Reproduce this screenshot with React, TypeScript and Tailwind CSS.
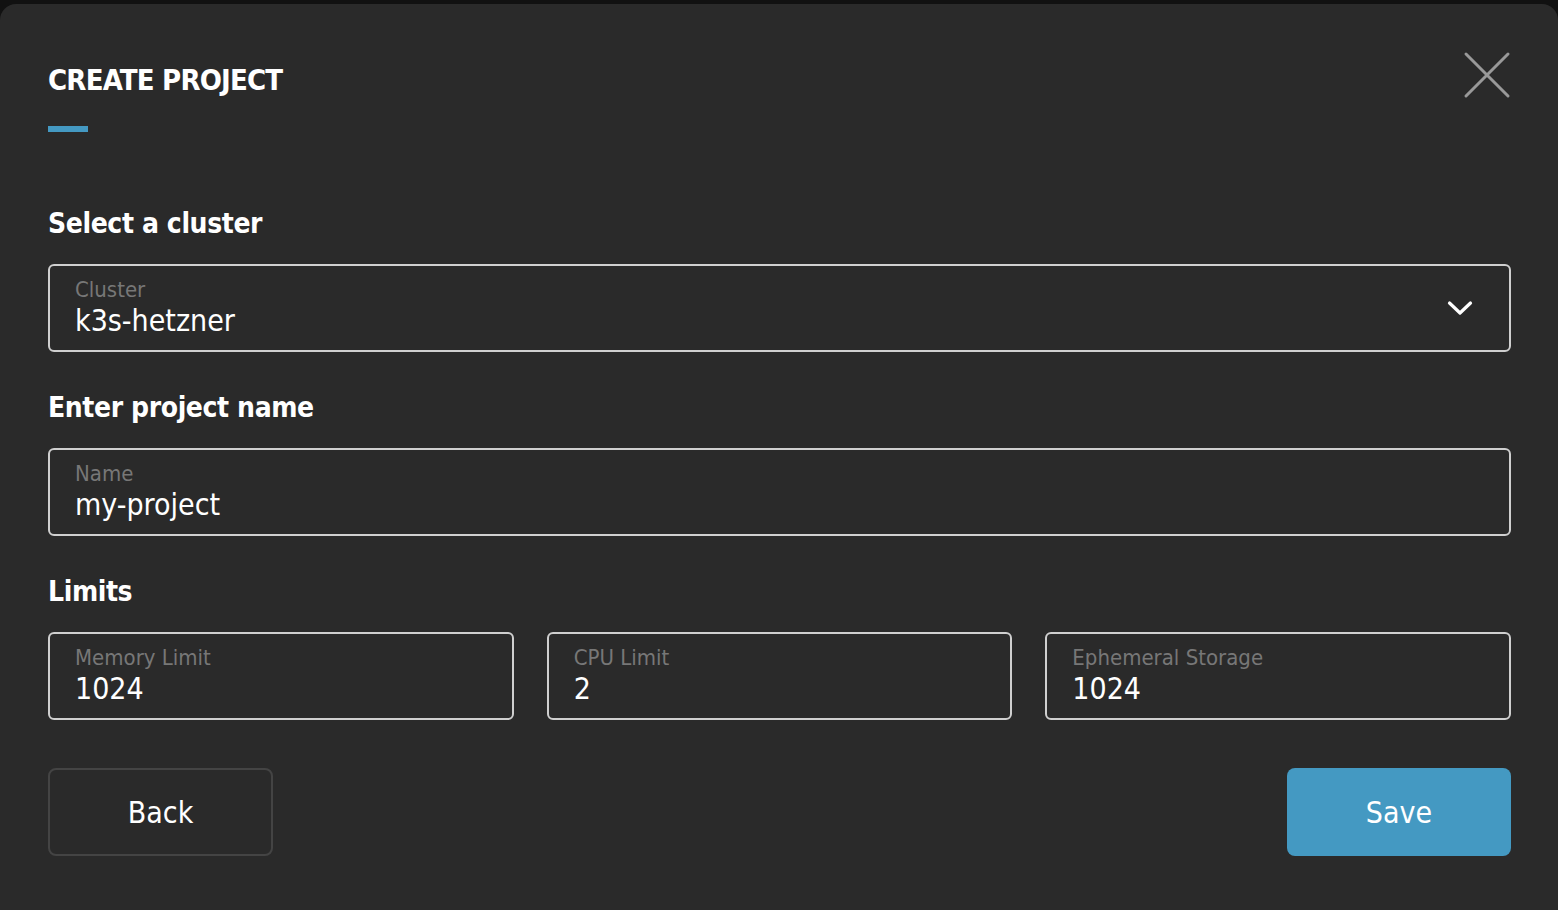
const font = { fontFamily: '"DejaVu Sans Condensed", Roboto, "Noto Sans", sans-serif' }

function Field({ label, value, chevron }: { label: string; value: string; chevron?: boolean }) {
  return (
    <div className="flex h-[88px] items-center rounded-md border-2 border-[#cfcfcf] px-[25px]">
      <div className="flex-1 min-w-0">
        <div className="text-[22px] leading-[26px] text-[#777777]">{label}</div>
        <div className="text-[30px] leading-[36px] text-white">{value}</div>
      </div>
      {chevron && (
        <svg width="26" height="16" viewBox="0 0 26 16" fill="none" stroke="white" strokeWidth="3.2" strokeLinecap="round" strokeLinejoin="round" className="mr-[11px]">
          <path d="M2.5 3 L13 13 L23.5 3" />
        </svg>
      )}
    </div>
  )
}

export default function App() {
  return (
    <div className="h-[910px] bg-[#111111] pt-1 overflow-hidden" style={font}>
      <div className="h-full rounded-t-2xl bg-[#2a2a2a] pl-12 pr-[47px]">
        <div className="flex items-start justify-between pt-[56px]">
          <h1 className="text-[29px] leading-[40px] font-bold text-white tracking-[-0.8px]">CREATE PROJECT</h1>
          <button className="mt-[-10px] mr-[-1px] text-[#999999]">
            <svg width="50" height="50" viewBox="0 0 50 50" fill="none" stroke="currentColor" strokeWidth="3" strokeLinecap="round">
              <path d="M4 4 L46 46 M46 4 L4 46" />
            </svg>
          </button>
        </div>
        <div className="mt-[26px] h-[6px] w-10 bg-[#4499c2]" />

        <h2 className="mt-[72px] text-[28px] leading-[40px] font-bold text-white tracking-[-0.4px]">Select a cluster</h2>
        <div className="mt-[20px]">
          <Field label="Cluster" value="k3s-hetzner" chevron />
        </div>

        <h2 className="mt-[36px] text-[28px] leading-[40px] font-bold text-white tracking-[-0.4px]">Enter project name</h2>
        <div className="mt-[20px]">
          <Field label="Name" value="my-project" />
        </div>

        <h2 className="mt-[36px] text-[28px] leading-[40px] font-bold text-white tracking-[-0.4px]">Limits</h2>
        <div className="mt-[20px] grid grid-cols-3 gap-[33px]">
          <Field label="Memory Limit" value="1024" />
          <Field label="CPU Limit" value="2" />
          <Field label="Ephemeral Storage" value="1024" />
        </div>

        <div className="mt-[48px] flex justify-between">
          <button className="h-[88px] w-[225px] rounded-lg border-2 border-[#444444] text-[30px] text-white">Back</button>
          <button className="h-[88px] w-[224px] rounded-lg bg-[#4499c2] text-[30px] text-white">Save</button>
        </div>
      </div>
    </div>
  )
}
